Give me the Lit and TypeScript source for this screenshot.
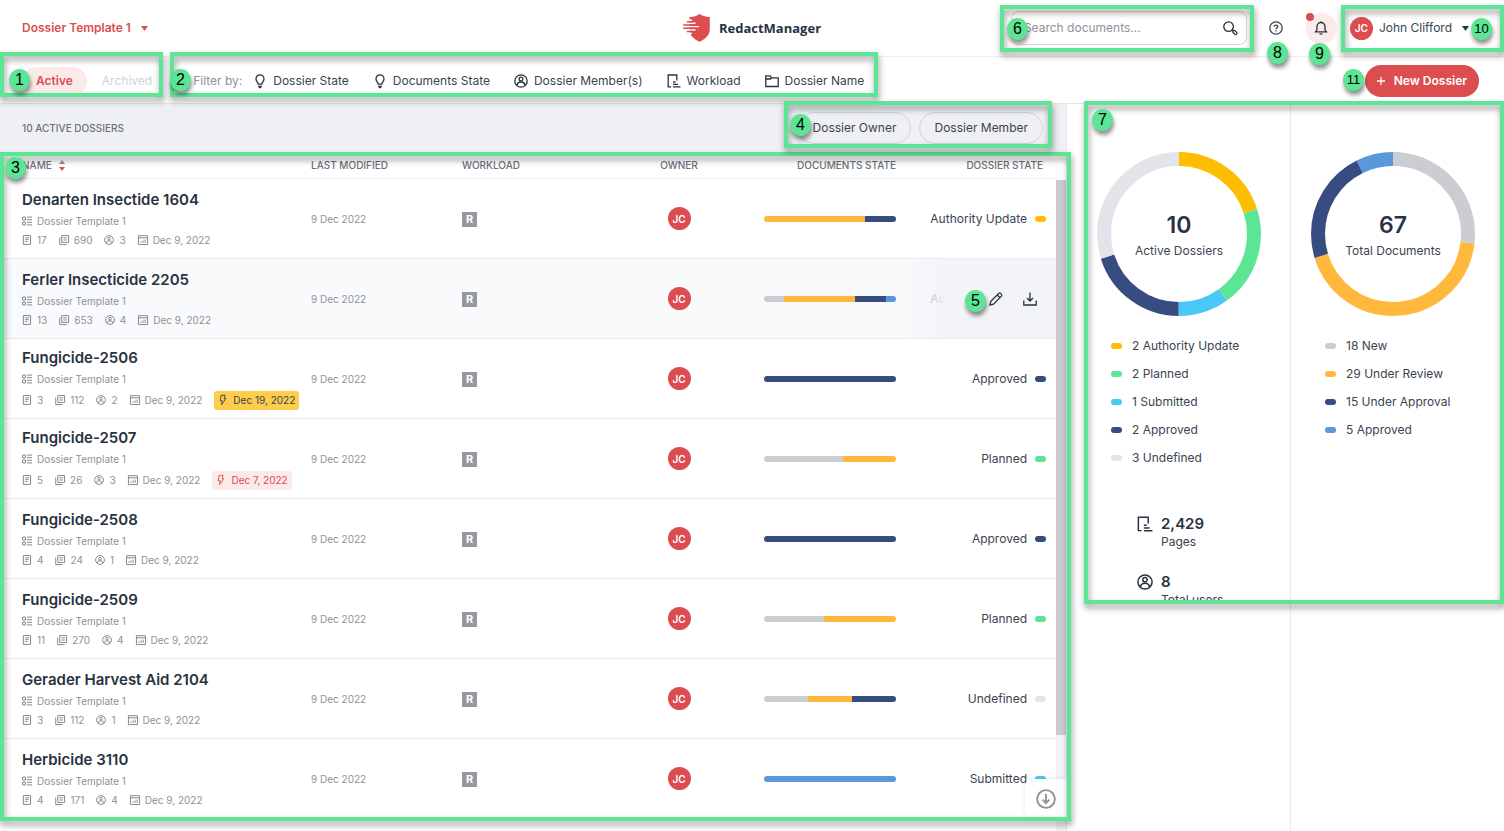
import { LitElement, html, svg, css, nothing } from "lit";
import type { TemplateResult, SVGTemplateResult } from "lit";
import { customElement, property } from "lit/decorators.js";

const COLORS = {
  grey: "#cccdd3",
  light: "#e2e4e9",
  amber: "#ffb83b",
  yellow: "#fdbd00",
  green: "#5ce594",
  cyan: "#48c9f7",
  navy: "#374c81",
  blue: "#5b97db",
};
type Color = keyof typeof COLORS;

interface Segment {
  color: Color;
  value: number;
}

interface Dossier {
  name: string;
  files: number;
  pages: number;
  members: number;
  due?: string;
  dueKind?: "soon" | "late";
  bar: Segment[];
  state: string;
  stateColor: Color;
  hovered?: boolean;
}

const seg = (color: Color, value: number): Segment => ({ color, value });

const DOSSIERS: Dossier[] = [
  { name: "Denarten Insectide 1604", files: 17, pages: 690, members: 3, bar: [seg("amber", 13), seg("navy", 4)], state: "Authority Update", stateColor: "yellow" },
  { name: "Ferler Insecticide 2205", files: 13, pages: 653, members: 4, bar: [seg("grey", 2), seg("amber", 7), seg("navy", 3), seg("blue", 1)], state: "Authority Update", stateColor: "yellow", hovered: true },
  { name: "Fungicide-2506", files: 3, pages: 112, members: 2, due: "Dec 19, 2022", dueKind: "soon", bar: [seg("navy", 3)], state: "Approved", stateColor: "navy" },
  { name: "Fungicide-2507", files: 5, pages: 26, members: 3, due: "Dec 7, 2022", dueKind: "late", bar: [seg("grey", 3), seg("amber", 2)], state: "Planned", stateColor: "green" },
  { name: "Fungicide-2508", files: 4, pages: 24, members: 1, bar: [seg("navy", 4)], state: "Approved", stateColor: "navy" },
  { name: "Fungicide-2509", files: 11, pages: 270, members: 4, bar: [seg("grey", 5), seg("amber", 6)], state: "Planned", stateColor: "green" },
  { name: "Gerader Harvest Aid 2104", files: 3, pages: 112, members: 1, bar: [seg("grey", 1), seg("amber", 1), seg("navy", 1)], state: "Undefined", stateColor: "light" },
  { name: "Herbicide 3110", files: 4, pages: 171, members: 4, bar: [seg("blue", 4)], state: "Submitted", stateColor: "cyan" },
];

const ICONS: Record<string, SVGTemplateResult> = {
  bulb: svg`<path d="M5.200 10.200C5.200 8.600 3 7.400 3 4.900a4 4 0 0 1 8 0c0 2.500-2.200 3.700-2.200 5.300z"/><path d="M5.200 12.500h3.600M6 13.600h2"/>`,
  user: svg`<circle cx="7" cy="7" r="6.200"/><circle cx="7" cy="5" r="1.900"/><path d="M3 11.500c.3-2.400 1.800-3.500 4-3.500s3.700 1.100 4 3.500"/>`,
  workload: svg`<path d="M4 12.800H1.200V1h8.600v5.500"/><path d="M6 8h2.500M6 10.400h5M6 12.900h7.500"/>`,
  folder: svg`<path d="M.8 12.500V1.800h4.400l1.300 2h6.700v8.700z"/><path d="M.8 5h4.500l1.200-1.200"/>`,
  template: svg`<path d="M.8 1.500h4v4h-4zM.8 8.500h4v4h-4zM7 1.500h7M7 5.200h7M7 8.800h7M7 12.500h7"/>`,
  file: svg`<path d="M2 .8h10v12.400H2z"/><path d="M4.500 4h5M4.500 6.500h5M4.500 9h3"/>`,
  files: svg`<path d="M3.800 .8h9.600v9.600H3.800z"/><path d="M1 3.500v9.900h9.700M6 4h5M6 7h5"/>`,
  calendar: svg`<path d="M.6 1h12.800v12.400H.6zM.6 4h12.800"/><path d="M4 9v2M7 7.500V11M10 6.500V11"/>`,
  bolt: svg`<path d="M4.500 .5h5.500L8.500 5H11L5 13.500l1-5.500H3z"/>`,
  search: svg`<circle cx="5.600" cy="5.600" r="4.800"/><path d="M9.100 9.100l1 1"/><rect x="9.600" y="10.200" width="4.600" height="2.600" rx="1.300" transform="rotate(45 11.900 11.500)"/>`,
  help: svg`<circle cx="7" cy="7" r="6.200"/><path d="M5.300 5.700c0-2.200 3.500-2.200 3.500 0C8.800 6.900 7 6.800 7 8.200M7 9.300v1.300"/>`,
  bell: svg`<path d="M1.500 10.800h11L11 8.800V5.500a4 4 0 0 0-8 0v3.300zM5.500 12.900h3M7 .3v1.200"/>`,
  pencil: svg`<path d="M1 13l.8-3.600L10 1.200c1-.9 3.600 1.700 2.700 2.700l-8.200 8.200zM8.300 3l2.800 2.800"/>`,
  download: svg`<path d="M7 .5v8.300M4 6l3 3 3-3M.8 8.500V13h12.400V8.500"/>`,
  down: svg`<circle cx="7" cy="7" r="6.200"/><path d="M7 3.500v6.300M4.600 7.500L7 9.900l2.400-2.400"/>`,
  plus: svg`<path d="M7 3v8M3 7h8"/>`,
};

const icon = (name: string, extra = ""): TemplateResult => html`
  <svg class="icon ${extra}" viewBox="0 0 14 14" fill="none" stroke="currentColor" stroke-width="1.300" aria-hidden="true">${ICONS[name]}</svg>
`;

@customElement("rm-donut")
export class RmDonut extends LitElement {
  @property({ attribute: false }) segments: Segment[] = [];
  @property() total = "";
  @property() label = "";

  static styles = css`
    :host { display: grid; width: 164px; height: 164px; }
    .ring, .center { grid-area: 1 / 1; }
    .ring { width: 100%; height: 100%; }
    .center { display: flex; flex-direction: column; align-items: center; justify-content: center; gap: 4px; padding-top: 2px; }
    .total { font-size: 23px; line-height: 28px; font-weight: 600; color: #283241; }
    .label { font-size: 12px; line-height: 16px; }
  `;

  render() {
    const sum = this.segments.reduce((n, s) => n + s.value, 0) || 1;
    const length = 2 * Math.PI * 75;
    let start = 0;
    const arcs = this.segments.map((s) => {
      const size = (s.value / sum) * length;
      const arc = svg`<circle cx="82" cy="82" r="75" fill="none" stroke=${COLORS[s.color]} stroke-width="14"
        stroke-dasharray="${size} ${length - size}" stroke-dashoffset=${-start} transform="rotate(-90 82 82)"/>`;
      start += size;
      return arc;
    });
    return html`
      <svg class="ring" viewBox="0 0 164 164" aria-hidden="true">${arcs}</svg>
      <div class="center"><span class="total">${this.total}</span><span class="label">${this.label}</span></div>
    `;
  }
}

@customElement("app-root")
export class AppRoot extends LitElement {
  static styles = css`
    :host {
      display: flex; flex-direction: column; position: relative; height: 100vh; overflow: hidden;
      background: #fff; color: #3a4350; font: 400 12px/16px Inter, "Open Sans", sans-serif;
    }
    * { box-sizing: border-box; }
    button, input { font: inherit; color: inherit; background: none; border: 0; padding: 0; margin: 0; }
    button { display: inline-flex; align-items: center; white-space: nowrap; cursor: pointer; }
    a { color: inherit; text-decoration: none; }
    .icon { width: 14px; height: 14px; flex: none; display: block; overflow: visible; }
    .icon.small { width: 10px; height: 10px; }
    .icon.big { width: 16px; height: 16px; }
    .icon.large { width: 20px; height: 20px; }

    .topbar { display: grid; grid-template-columns: 1fr auto 1fr; align-items: center; height: 57px; flex: none; padding: 0 22px; border-bottom: 1px solid #eeeff2; }
    .template { justify-self: start; gap: 10px; color: #dd4d50; font-weight: 600; }
    .caret { width: 7px; height: 5px; fill: currentColor; }
    .brand { display: flex; align-items: center; gap: 9px; font: 700 13px/18px "Open Sans", sans-serif; color: #283241; }
    .brand svg { width: 27px; height: 28px; }
    .tools { display: flex; align-items: center; justify-self: end; margin-right: 13px; }
    .search { display: flex; align-items: center; width: 236px; height: 34px; padding: 0 9px 0 12px; margin-right: 22px; border: 1px solid #d3d5da; border-radius: 8px; color: #283241; }
    .search input { flex: 1; min-width: 0; outline: none; }
    .search input::placeholder { color: #8d929b; opacity: 1; }
    .bell { position: relative; justify-content: center; width: 31px; height: 31px; margin: 0 13px 0 23px; border-radius: 50%; background: #fbeaea; color: #283241; }
    .dot { position: absolute; top: 0; left: 0; width: 8px; height: 8px; border-radius: 50%; background: #dd4d50; }
    .avatar { display: inline-flex; align-items: center; justify-content: center; width: 23px; height: 23px; border-radius: 50%; background: #dd4d50; color: #fff; font-size: 10px; font-weight: 600; }
    .user { gap: 6px; }
    .user .caret { margin-left: 4px; color: #283241; }

    .subbar { display: flex; align-items: center; height: 47px; flex: none; padding: 2px 25px 0 22px; border-bottom: 1px solid #e4e6eb; }
    .tab { height: 28px; padding: 0 14px; border-radius: 14px; color: #cfd1d6; }
    .tab.on { background: #fbeaea; color: #dd4d50; font-weight: 600; }
    .tabs { display: flex; gap: 1px; }
    .filters { display: flex; align-items: center; gap: 24px; margin-left: 27px; }
    .filters .lead { color: #8d929b; margin-right: -13px; }
    .filters button { gap: 6px; }
    .filters .icon { color: #283241; }
    .create { gap: 6px; height: 32px; margin-left: auto; padding: 0 12px 0 9px; border-radius: 16px; background: #dd4d50; color: #fff; font-weight: 600; }

    .main { display: flex; flex: 1; min-height: 0; }
    .list { display: flex; flex-direction: column; flex: 1; min-width: 0; border-right: 1px solid #e9eaee; }
    .listbar { display: flex; align-items: center; gap: 8px; height: 48px; flex: none; padding: 0 23px 0 22px; background: #eff0f4; }
    .count { margin: 0 auto 0 0; font-size: 10px; font-weight: 500; color: #6b717c; }
    .chip { height: 32px; padding: 0 14px; border: 1px solid #d3d5da; border-radius: 16px; }
    .scroller { display: flex; flex: 1; min-height: 0; position: relative; overflow: hidden; }
    table { flex: 1; width: 100%; height: max-content; border-collapse: separate; border-spacing: 0; table-layout: fixed; }
    .c-date { width: 151px; } .c-load { width: 162px; } .c-owner { width: 110px; } .c-docs { width: 162px; } .c-state { width: 160px; }
    th { height: 27px; padding: 0; font-size: 10px; line-height: 14px; font-weight: 500; color: #6b717c; text-align: left; border-bottom: 1px solid #eeeff2; white-space: nowrap; }
    th button { gap: 7px; }
    .sort { width: 6px; height: 11px; }
    td { height: 80px; padding: 0; border-bottom: 1px solid #e9eaee; vertical-align: middle; white-space: nowrap; }
    .first { padding-left: 22px; }
    .mid { text-align: center; }
    .end { text-align: right; }
    th.end.last { padding-right: 13px; }
    td.last { padding-right: 10px; position: relative; }
    .hovered td { background: #f9fafc; }
    .name { display: block; font-size: 15px; line-height: 20px; font-weight: 600; color: #283241; margin-bottom: 4px; }
    .meta { display: flex; align-items: center; gap: 12px; font-size: 10px; line-height: 15px; color: #8d929b; }
    .meta + .meta { margin-top: 4px; }
    .item { display: inline-flex; align-items: center; gap: 5px; }
    .item .icon { color: #7b818b; }
    .due { height: 19px; padding: 0 4px; border-radius: 3px; }
    .due.soon { background: #fdcd4b; color: #3a4350; }
    .due.late { background: #fbeaea; color: #dd4d50; }
    .due .icon { color: inherit; }
    .date { font-size: 10px; color: #8d929b; }
    .tag { display: inline-flex; align-items: center; justify-content: center; width: 15px; height: 15px; background: #9598a3; color: #fff; font-size: 11px; line-height: 15px; font-weight: 700; vertical-align: middle; }
    .bar { display: flex; width: 132px; height: 6px; margin-left: auto; border-radius: 3px; overflow: hidden; }
    .state { display: inline-flex; align-items: center; gap: 8px; }
    .pill { width: 11px; height: 6px; border-radius: 3px; flex: none; }
    .actions { position: absolute; inset: 0; display: flex; align-items: center; justify-content: flex-end; gap: 20px; padding-right: 19px; color: #283241; background: linear-gradient(90deg, #f3f4f700, #f3f4f7 50px); }
    .track { width: 10px; flex: none; margin-top: 28px; background: #f2f3f6; }
    .thumb { height: 86%; max-height: 555px; background: #c9cad1; }
    .tobottom { position: absolute; right: 0; bottom: 12px; width: 41px; height: 40px; justify-content: center; background: #fff; border-radius: 8px 0 0 8px; box-shadow: 0 0 5px #28324120; color: #8d929b; }

    .stats { display: grid; grid-template-columns: 224px 1fr; width: 437px; flex: none; }
    .col { padding: 48px 0 0 20px; min-width: 0; }
    .col:first-child { padding-left: 30px; border-right: 1px solid #e9eaee; }
    .legend { list-style: none; margin: 22px 0 0; padding: 0 0 0 14px; display: flex; flex-direction: column; gap: 12px; }
    .legend li { display: flex; align-items: center; gap: 10px; }
    .totals { margin: 48px 0 0 40px; display: flex; flex-direction: column; gap: 22px; }
    .fact { display: grid; grid-template-columns: 16px auto; column-gap: 8px; align-items: center; justify-content: start; color: #283241; }
    .fact b { font-size: 15px; line-height: 20px; font-weight: 600; }
    .fact span { grid-column: 2; color: #3a4350; }

    .frame { position: absolute; pointer-events: none; border: 4px solid #5ce594; filter: drop-shadow(1px 4px 3px #0000006b); }
    .badge { position: absolute; display: flex; align-items: center; justify-content: center; width: 21px; height: 22px; border-radius: 50%; background: #5ce594; color: #000; font: 16px/22px "Liberation Sans", Arial, sans-serif; box-shadow: 1px 4px 4px #00000070; pointer-events: none; }
    .badge.two { font-size: 13px; }
    .f1 { left: 0; top: 52px; width: 163px; height: 45px; }
    .f2 { left: 170px; top: 52px; width: 708px; height: 45px; }
    .f3 { left: 0; top: 152px; right: 433px; bottom: 10px; }
    .f4 { right: 452px; top: 101px; width: 268px; height: 47px; }
    .f6 { right: 250px; top: 5px; width: 254px; height: 47px; }
    .f7 { right: 0; top: 101px; width: 420px; height: 503px; }
    .f10 { right: 0; top: 5px; width: 163px; height: 47px; }
    .b1 { left: 9px; top: 69px; }
    .b2 { left: 170px; top: 69px; }
    .b3 { left: 5px; top: 157px; }
    .b4 { right: 693px; top: 114px; }
    .b5 { right: 518px; top: 290px; }
    .b6 { right: 476px; top: 18px; }
    .b7 { right: 391px; top: 109px; }
    .b8 { right: 216px; top: 42px; }
    .b9 { right: 174px; top: 43px; }
    .b10 { right: 12px; top: 18px; }
    .b11 { right: 140px; top: 69px; }
  `;

  private caret = html`<svg class="caret" viewBox="0 0 7 5" aria-hidden="true"><path d="M0 0h7L3.500 5z"/></svg>`;

  private row(d: Dossier) {
    return html`
      <tr class=${d.hovered ? "hovered" : ""}>
        <td class="first">
          <a class="name" href="#">${d.name}</a>
          <div class="meta"><span class="item">${icon("template", "small")}Dossier Template 1</span></div>
          <div class="meta">
            <span class="item">${icon("file", "small")}${d.files}</span>
            <span class="item">${icon("files", "small")}${d.pages}</span>
            <span class="item">${icon("user", "small")}${d.members}</span>
            <span class="item">${icon("calendar", "small")}Dec 9, 2022</span>
            ${d.due ? html`<span class="item due ${d.dueKind}">${icon("bolt", "small")}${d.due}</span>` : nothing}
          </div>
        </td>
        <td class="date">9 Dec 2022</td>
        <td><span class="tag">R</span></td>
        <td class="mid"><span class="avatar">JC</span></td>
        <td><div class="bar">${d.bar.map((s) => html`<span style="flex:${s.value};background:${COLORS[s.color]}"></span>`)}</div></td>
        <td class="end last">
          <span class="state">${d.state}<span class="pill" style="background:${COLORS[d.stateColor]}"></span></span>
          ${d.hovered
            ? html`<div class="actions">
                <button aria-label="Edit dossier">${icon("pencil")}</button>
                <button aria-label="Download dossier">${icon("download")}</button>
              </div>`
            : nothing}
        </td>
      </tr>
    `;
  }

  private legend(items: [Color, string][]) {
    return html`<ul class="legend">
      ${items.map(([c, text]) => html`<li><span class="pill" style="background:${COLORS[c]}"></span>${text}</li>`)}
    </ul>`;
  }

  render() {
    const filters: [string, string][] = [
      ["bulb", "Dossier State"],
      ["bulb", "Documents State"],
      ["user", "Dossier Member(s)"],
      ["workload", "Workload"],
      ["folder", "Dossier Name"],
    ];
    return html`
      <header class="topbar">
        <button class="template">Dossier Template 1 ${this.caret}</button>
        <div class="brand">
          <svg viewBox="0 0 27 28" aria-hidden="true">
            <path fill="#dd4d50" d="M16.500 0c2.500 1.900 6 2.800 10.300 2.900v12.300c0 5.600-4.500 9.900-10.300 12.600C11.700 25.600 8.200 22.500 6.800 18.800L6.500 3c4.200-.2 7.500-1.100 10-3z"/>
            <path stroke="#fff" stroke-width="1.400" d="M4 6.200h5M3 9.200h9.500M0 12.600h16M3 16h9.500M4 19.200h5"/>
            <path stroke="#dd4d50" stroke-width="1.500" d="M3.800 7.700H10M.2 10.900H11M.2 14.300H11M3.800 17.600H10"/>
          </svg>
          <span>RedactManager</span>
        </div>
        <div class="tools">
          <div class="search">
            <input type="text" placeholder="Search documents..." aria-label="Search documents" />
            <button aria-label="Search">${icon("search")}</button>
          </div>
          <button aria-label="Help">${icon("help")}</button>
          <button class="bell" aria-label="Notifications">${icon("bell")}<span class="dot"></span></button>
          <button class="user"><span class="avatar">JC</span>John Clifford ${this.caret}</button>
        </div>
      </header>

      <nav class="subbar">
        <div class="tabs"><button class="tab on">Active</button><button class="tab">Archived</button></div>
        <div class="filters">
          <span class="lead">Filter by:</span>
          ${filters.map(([i, text]) => html`<button>${icon(i)}${text}</button>`)}
        </div>
        <button class="create">${icon("plus")}New Dossier</button>
      </nav>

      <main class="main">
        <section class="list">
          <div class="listbar">
            <h1 class="count">10 ACTIVE DOSSIERS</h1>
            <button class="chip">Dossier Owner</button>
            <button class="chip">Dossier Member</button>
          </div>
          <div class="scroller">
            <table>
              <colgroup><col /><col class="c-date" /><col class="c-load" /><col class="c-owner" /><col class="c-docs" /><col class="c-state" /></colgroup>
              <thead>
                <tr>
                  <th class="first">
                    <button>NAME
                      <svg class="sort" viewBox="0 0 6 11" aria-hidden="true"><path fill="#8d929b" d="M0 4h6L3 0z"/><path fill="#dd4d50" d="M0 7h6l-3 4z"/></svg>
                    </button>
                  </th>
                  <th>LAST MODIFIED</th>
                  <th>WORKLOAD</th>
                  <th class="mid">OWNER</th>
                  <th class="end">DOCUMENTS STATE</th>
                  <th class="end last">DOSSIER STATE</th>
                </tr>
              </thead>
              <tbody>${DOSSIERS.map((d) => this.row(d))}</tbody>
            </table>
            <div class="track"><div class="thumb"></div></div>
            <button class="tobottom" aria-label="Scroll to bottom">${icon("down", "large")}</button>
          </div>
        </section>

        <aside class="stats">
          <div class="col">
            <rm-donut total="10" label="Active Dossiers"
              .segments=${[seg("yellow", 2), seg("green", 2), seg("cyan", 1), seg("navy", 2), seg("light", 3)]}></rm-donut>
            ${this.legend([["yellow", "2 Authority Update"], ["green", "2 Planned"], ["cyan", "1 Submitted"], ["navy", "2 Approved"], ["light", "3 Undefined"]])}
            <div class="totals">
              <div class="fact">${icon("workload", "big")}<b>2,429</b><span>Pages</span></div>
              <div class="fact">${icon("user", "big")}<b>8</b><span>Total users</span></div>
            </div>
          </div>
          <div class="col">
            <rm-donut total="67" label="Total Documents"
              .segments=${[seg("grey", 18), seg("amber", 29), seg("navy", 15), seg("blue", 5)]}></rm-donut>
            ${this.legend([["grey", "18 New"], ["amber", "29 Under Review"], ["navy", "15 Under Approval"], ["blue", "5 Approved"]])}
          </div>
        </aside>
      </main>

      ${[1, 2, 3, 4, 6, 7, 10].map((n) => html`<div class="frame f${n}"></div>`)}
      ${[1, 2, 3, 4, 5, 6, 7, 8, 9, 10, 11].map((n) => html`<span class="badge b${n} ${n > 9 ? "two" : ""}">${n}</span>`)}
    `;
  }
}
